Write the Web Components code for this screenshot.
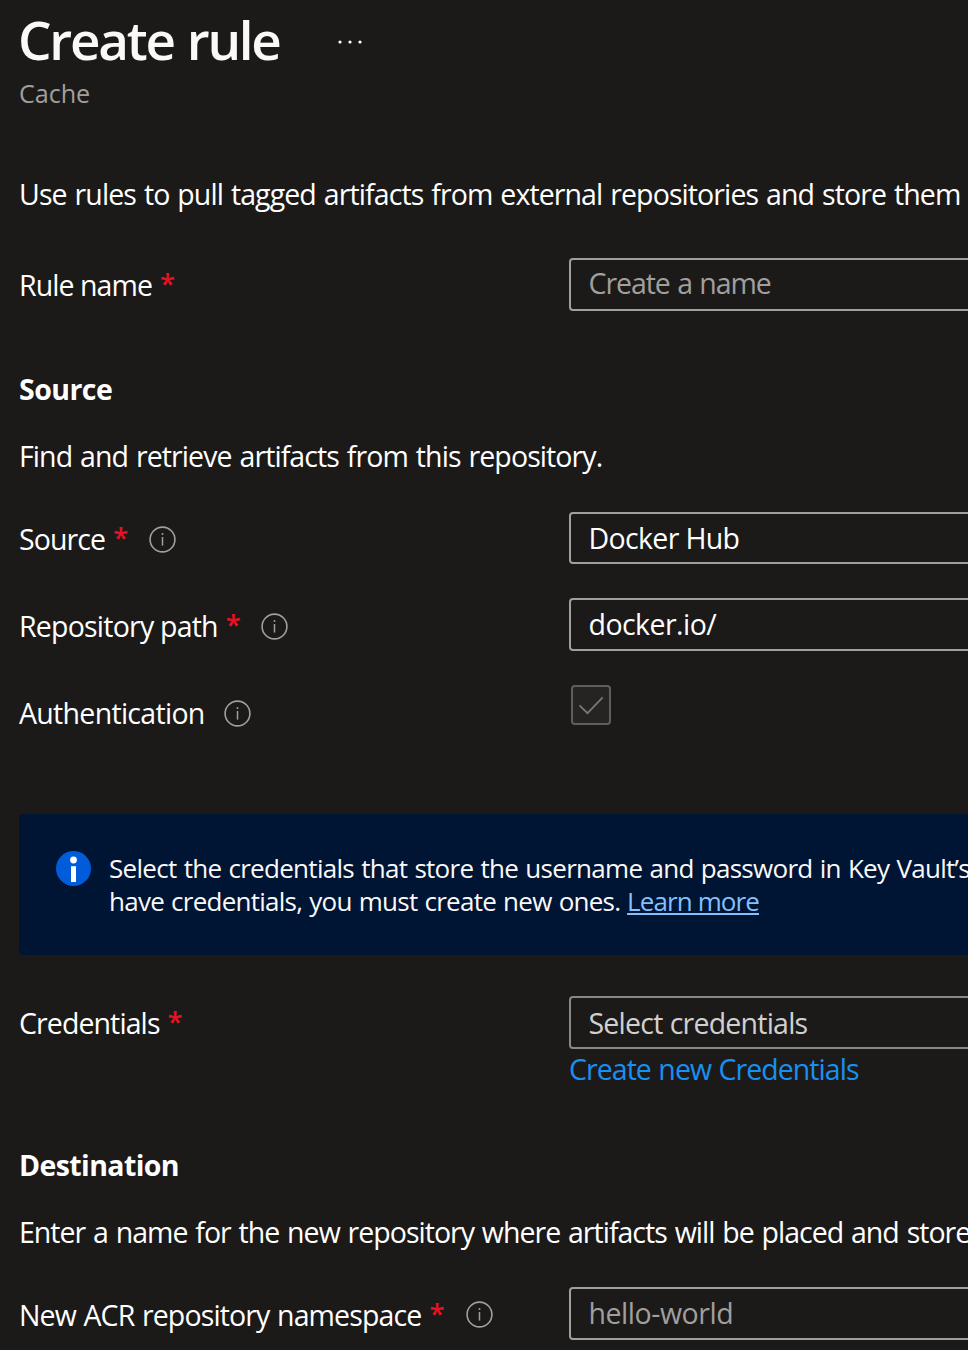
<!DOCTYPE html>
<html lang="en">
<head>
<meta charset="utf-8">
<title>Create rule</title>
<style>
html, body { margin: 0; height: 1350px; overflow: hidden; background: #1b1a19; }
body { font-family: "Open Sans", "Noto Sans", sans-serif; font-size: 28.5px; line-height: 40px; color: #fff; }
</style>
</head>
<body>
<rule-page>
  <page-header heading="Create rule" sub="Cache"></page-header>
  <text-line style="margin-top:65px;--ls:-.9px;--ws:1.4px">Use rules to pull tagged artifacts from external repositories and store them</text-line>
  <form-row label="Rule name" required style="margin-top:44px;--ls:-.93px">
    <text-field style="--pt:3px;--ls:-1.05px;--ws:1px;--fg:#a19f9d">Create a name</text-field>
  </form-row>
  <text-line strong style="margin-top:58px;--ls:-.55px">Source</text-line>
  <text-line style="margin-top:27px;--ls:-.91px;--ws:1.4px">Find and retrieve artifacts from this repository.</text-line>
  <form-row label="Source" required info style="margin-top:36px;--ls:-.9px">
    <text-field style="--h:52px;--ls:-.66px">Docker Hub</text-field>
  </form-row>
  <form-row label="Repository path" required info style="margin-top:34px;--lt:8px;--ls:-.78px">
    <text-field style="--ls:-.55px">docker.io/</text-field>
  </form-row>
  <form-row label="Authentication" info style="margin-top:34px;--lt:8px;--ls:-.7px;--ig:19px">
    <check-box></check-box>
  </form-row>
  <info-banner style="margin-top:81px">
    <span style="letter-spacing:-.71px;word-spacing:1.1px">Select the credentials that store the username and password in Key Vault’s</span><br>
    <span style="letter-spacing:-.75px;word-spacing:1.1px">have credentials, you must create new ones.</span>
    <banner-link>Learn more</banner-link>
  </info-banner>
  <form-row label="Credentials" required style="margin-top:41px;--ls:-.9px">
    <text-field style="--pt:5px;--ls:-.77px;--ws:.5px;--fg:#d2d0ce;--line:#8a8886">Select credentials</text-field>
    <action-link>Create new Credentials</action-link>
  </form-row>
  <text-line strong style="margin-top:56px;--ls:-.6px">Destination</text-line>
  <text-line style="margin-top:27px;--ls:-.98px;--ws:1.4px">Enter a name for the new repository where artifacts will be placed and store</text-line>
  <form-row label="New ACR repository namespace" required info style="margin-top:35px;--lt:8px;--it:-1px;--ls:-.87px;--ws:1px;--ig:21.5px">
    <text-field style="--ls:-.45px;--fg:#a19f9d">hello-world</text-field>
  </form-row>
</rule-page>
<script>
const define = (name, html, setup) => {
  const template = document.createElement('template');
  template.innerHTML = html;
  customElements.define(name, class extends HTMLElement {
    connectedCallback() {
      if (this.shadowRoot) return;
      const root = this.attachShadow({ mode: 'open' });
      root.append(template.content.cloneNode(true));
      if (setup) setup(this, root);
    }
  });
};

define('rule-page', `<style>
:host { display: flex; flex-direction: column; box-sizing: border-box; width: 968px; height: 1350px; padding: 4px 0 0 19px; overflow: hidden; }
::slotted(*) { flex: none; }
</style><slot></slot>`);

define('page-header', `<style>
:host { display: block; height: 105px; }
.top { display: flex; height: 70px; }
h1 { margin: 1px 0 0 -1px; width: 320px; font-size: 53px; line-height: 70px; font-weight: 600; letter-spacing: -2.25px; word-spacing: 1.5px; color: #faf9f8; }
svg { width: 26px; height: 6px; margin-top: 35px; }
p { margin: 0; font-size: 25.2px; line-height: 38px; letter-spacing: -.1px; color: #a19f9d; }
</style>
<div class="top"><h1></h1>
<svg viewBox="0 0 26 6" fill="#fff"><circle cx="2" cy="3" r="1.6"/><circle cx="12" cy="3" r="1.6"/><circle cx="22" cy="3" r="1.6"/></svg></div>
<p></p>`, (host, root) => {
  root.querySelector('h1').textContent = host.getAttribute('heading');
  root.querySelector('p').textContent = host.getAttribute('sub');
});

define('text-line', `<style>
:host { display: block; white-space: nowrap; letter-spacing: var(--ls); word-spacing: var(--ws, 0px); }
:host([strong]) { font-weight: 700; }
</style><slot></slot>`);

define('info-icon', `<style>
:host { display: block; width: 27px; height: 27px; }
svg { display: block; }
</style>
<svg width="27" height="27" viewBox="0 0 27 27"><circle cx="13.5" cy="13.5" r="12.4" fill="none" stroke="#a19f9d" stroke-width="1.6"/><path d="M13.5 11v8.6" stroke="#a19f9d" stroke-width="1.5"/><circle cx="13.5" cy="8.1" r="1" fill="#a19f9d"/></svg>`);

define('form-row', `<style>
:host { display: grid; grid-template-columns: 550px 1fr; align-items: start; }
.label { display: flex; height: 40px; margin-top: var(--lt, 7px); white-space: nowrap; }
.text { letter-spacing: var(--ls); word-spacing: var(--ws, 0px); }
.star { width: 15px; margin: -1px 0 0 8px; color: #e81123; font-weight: 600; font-size: 27.5px; }
info-icon { margin: calc(7px + var(--it, 0px)) 0 0 var(--ig, 20.6px); }
[hidden] { display: none; }
</style>
<div class="label"><span class="text"></span><span class="star">*</span><info-icon></info-icon></div>
<div><slot></slot></div>`, (host, root) => {
  root.querySelector('.text').textContent = host.getAttribute('label');
  root.querySelector('.star').hidden = !host.hasAttribute('required');
  root.querySelector('info-icon').hidden = !host.hasAttribute('info');
});

define('text-field', `<style>
:host { display: block; box-sizing: border-box; width: 430px; height: var(--h, 53px); padding: var(--pt, 4px) 0 0 17.5px; border: 2px solid var(--line, #a19f9d); border-radius: 4px; color: var(--fg, #fff); letter-spacing: var(--ls); word-spacing: var(--ws, 0px); white-space: nowrap; }
</style><slot></slot>`);

define('check-box', `<style>
:host { display: block; box-sizing: border-box; width: 40px; height: 40px; margin-left: 2px; border: 2px solid #605e5c; border-radius: 4px; background: #252423; }
svg { display: block; }
</style>
<svg width="36" height="36" viewBox="0 0 36 36"><path d="M6.5 18.3l8 7.8L29.7 10.3" fill="none" stroke="#797775" stroke-width="1.8"/></svg>`);

define('info-banner', `<style>
:host { display: flex; box-sizing: border-box; width: 1000px; height: 141px; padding: 37px 0 0 37px; border-radius: 4px; background: #001433; color: #faf9f8; }
svg { flex: none; width: 35px; height: 35px; margin-right: 18px; }
.text { margin-top: 1px; font-size: 26px; line-height: 33px; white-space: nowrap; }
</style>
<svg viewBox="0 0 35 35"><circle cx="17.5" cy="17.5" r="17.5" fill="#015cda"/><circle cx="17.5" cy="9" r="3.4" fill="#fff"/><path d="M15 15.2h5V31h-5z" fill="#fff"/></svg>
<div class="text"><slot></slot></div>`);

define('banner-link', `<style>
:host { display: inline; }
a { color: #82c0ff; letter-spacing: -.9px; text-decoration: underline; text-decoration-thickness: 2px; text-underline-offset: 2px; text-decoration-skip-ink: none; }
</style><a><slot></slot></a>`);

define('action-link', `<style>
:host { display: block; color: #1890f1; letter-spacing: -.95px; word-spacing: 1px; white-space: nowrap; }
</style><slot></slot>`);
</script>
</body>
</html>
